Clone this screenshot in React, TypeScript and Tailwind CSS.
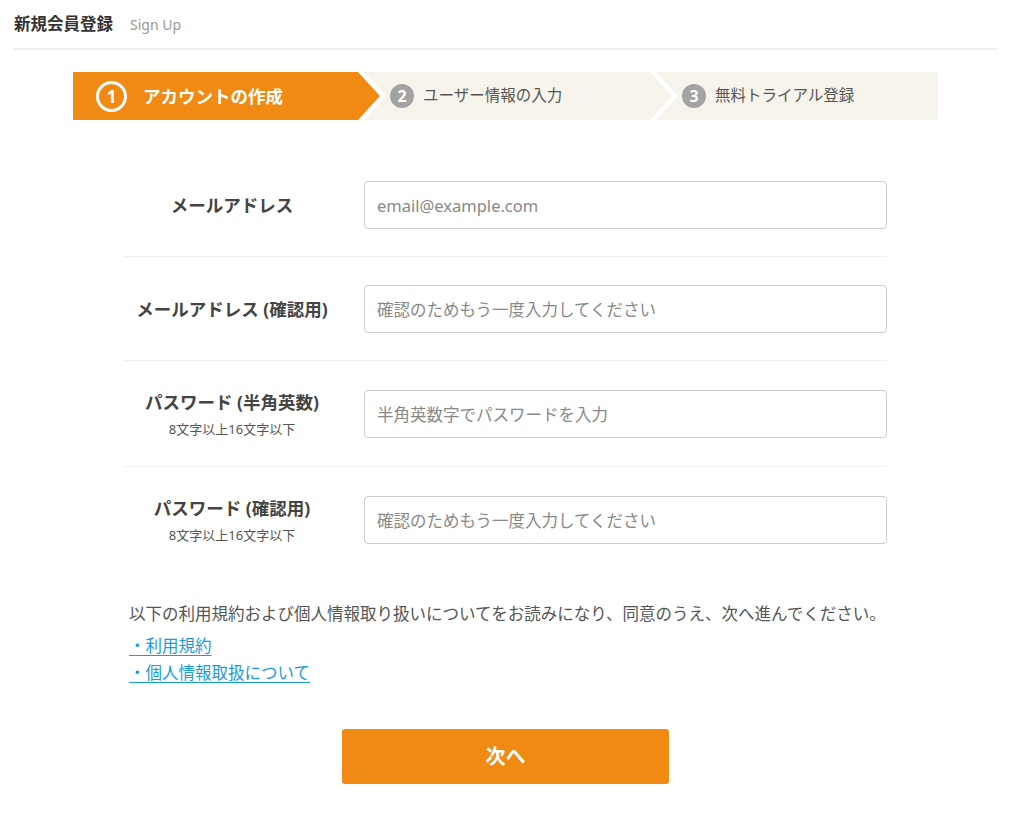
import React from "react";

const FONT = "font-['Noto_Sans','Noto_Sans_CJK_JP',sans-serif]";

type Row = {
  label: string;
  note?: string;
  placeholder: string;
  type: string;
};

const rows: Row[] = [
  { label: "メールアドレス", placeholder: "email@example.com", type: "email" },
  { label: "メールアドレス (確認用)", placeholder: "確認のためもう一度入力してください", type: "email" },
  { label: "パスワード (半角英数)", note: "8文字以上16文字以下", placeholder: "半角英数字でパスワードを入力", type: "password" },
  { label: "パスワード (確認用)", note: "8文字以上16文字以下", placeholder: "確認のためもう一度入力してください", type: "password" },
];

function Stepper() {
  return (
    <div className="mx-auto mt-[22px] flex h-[48px] w-[865px]">
      {/* step 1 (active) */}
      <div className="flex h-full w-[307px] shrink-0 items-center bg-[#f08a12] pl-[23px] [clip-path:polygon(0_0,calc(100%_-_22px)_0,100%_50%,calc(100%_-_22px)_100%,0_100%)]">
        <span className="flex h-[31px] w-[31px] items-center justify-center rounded-full border-[3px] border-white text-[17px] font-bold leading-none text-white">
          1
        </span>
        <span className="ml-[16px] text-[17.5px] font-bold text-white">アカウントの作成</span>
      </div>
      {/* step 2 */}
      <div className="-ml-[16px] flex h-full w-[308px] shrink-0 items-center bg-[#f7f4ec] pl-[26px] [clip-path:polygon(0_0,calc(100%_-_22px)_0,100%_50%,calc(100%_-_22px)_100%,0_100%,22px_50%)]">
        <span className="flex h-[24px] w-[24px] items-center justify-center rounded-full bg-[#a3a3a3] text-[16px] font-bold leading-none text-white">
          2
        </span>
        <span className="ml-[9px] text-[15.5px] text-[#555]">ユーザー情報の入力</span>
      </div>
      {/* step 3 */}
      <div className="-ml-[16px] flex h-full flex-1 items-center bg-[#f7f4ec] pl-[26px] [clip-path:polygon(0_0,100%_0,100%_100%,0_100%,22px_50%)]">
        <span className="flex h-[24px] w-[24px] items-center justify-center rounded-full bg-[#a3a3a3] text-[16px] font-bold leading-none text-white">
          3
        </span>
        <span className="ml-[9px] text-[15.5px] text-[#555]">無料トライアル登録</span>
      </div>
    </div>
  );
}

export default function App() {
  return (
    <div className={`${FONT} min-h-screen bg-white pl-[14px] pr-[27px] text-[#333]`}>
      {/* ヘッダー */}
      <div className="flex h-[50px] items-center border-b-2 border-[#eeeeee]">
        <h1 className="text-[16.5px] font-bold text-[#333]">新規会員登録</h1>
        <span className="ml-[17px] text-[14px] text-[#999]">Sign Up</span>
      </div>

      <Stepper />

      {/* フォーム */}
      <div className="mx-auto mt-[33px] w-[763px]">
        {rows.map((row, i) => (
          <div
            key={i}
            className={`grid grid-cols-[216px_1fr] items-center gap-[24px] pt-[28px] pb-[27px] ${
              i < rows.length - 1 ? "border-b border-[#f0f0f0]" : ""
            }`}
          >
            <div className="text-center">
              <div className="text-[17.5px] font-bold leading-[26px] text-[#444]">{row.label}</div>
              {row.note && <div className="mt-[4px] text-[13px] leading-[20px] text-[#555]">{row.note}</div>}
            </div>
            <input
              type={row.type}
              placeholder={row.placeholder}
              className="h-[48px] w-full rounded-[4px] border border-[#cccccc] bg-white px-[12px] text-[16.5px] text-[#333] outline-none placeholder:text-[#888]"
            />
          </div>
        ))}

        {/* 同意 */}
        <div className="mt-[30px] pl-[5px]">
          <p className="text-[16.5px] leading-[24px] text-[#555]">
            以下の利用規約および個人情報取り扱いについてをお読みになり、同意のうえ、次へ進んでください。
          </p>
          <div className="mt-[6px] flex flex-col items-start">
            <a href="#" className="text-[16.5px] leading-[27px] text-[#1a9be0] underline underline-offset-[3px]">
              ・利用規約
            </a>
            <a href="#" className="text-[16.5px] leading-[27px] text-[#1a9be0] underline underline-offset-[3px]">
              ・個人情報取扱について
            </a>
          </div>
        </div>

        <div className="mt-[43px] flex justify-center">
          <button className="h-[55px] w-[327px] rounded-[3px] bg-[#f08a12] text-[20px] font-bold text-white">
            次へ
          </button>
        </div>
      </div>
    </div>
  );
}
